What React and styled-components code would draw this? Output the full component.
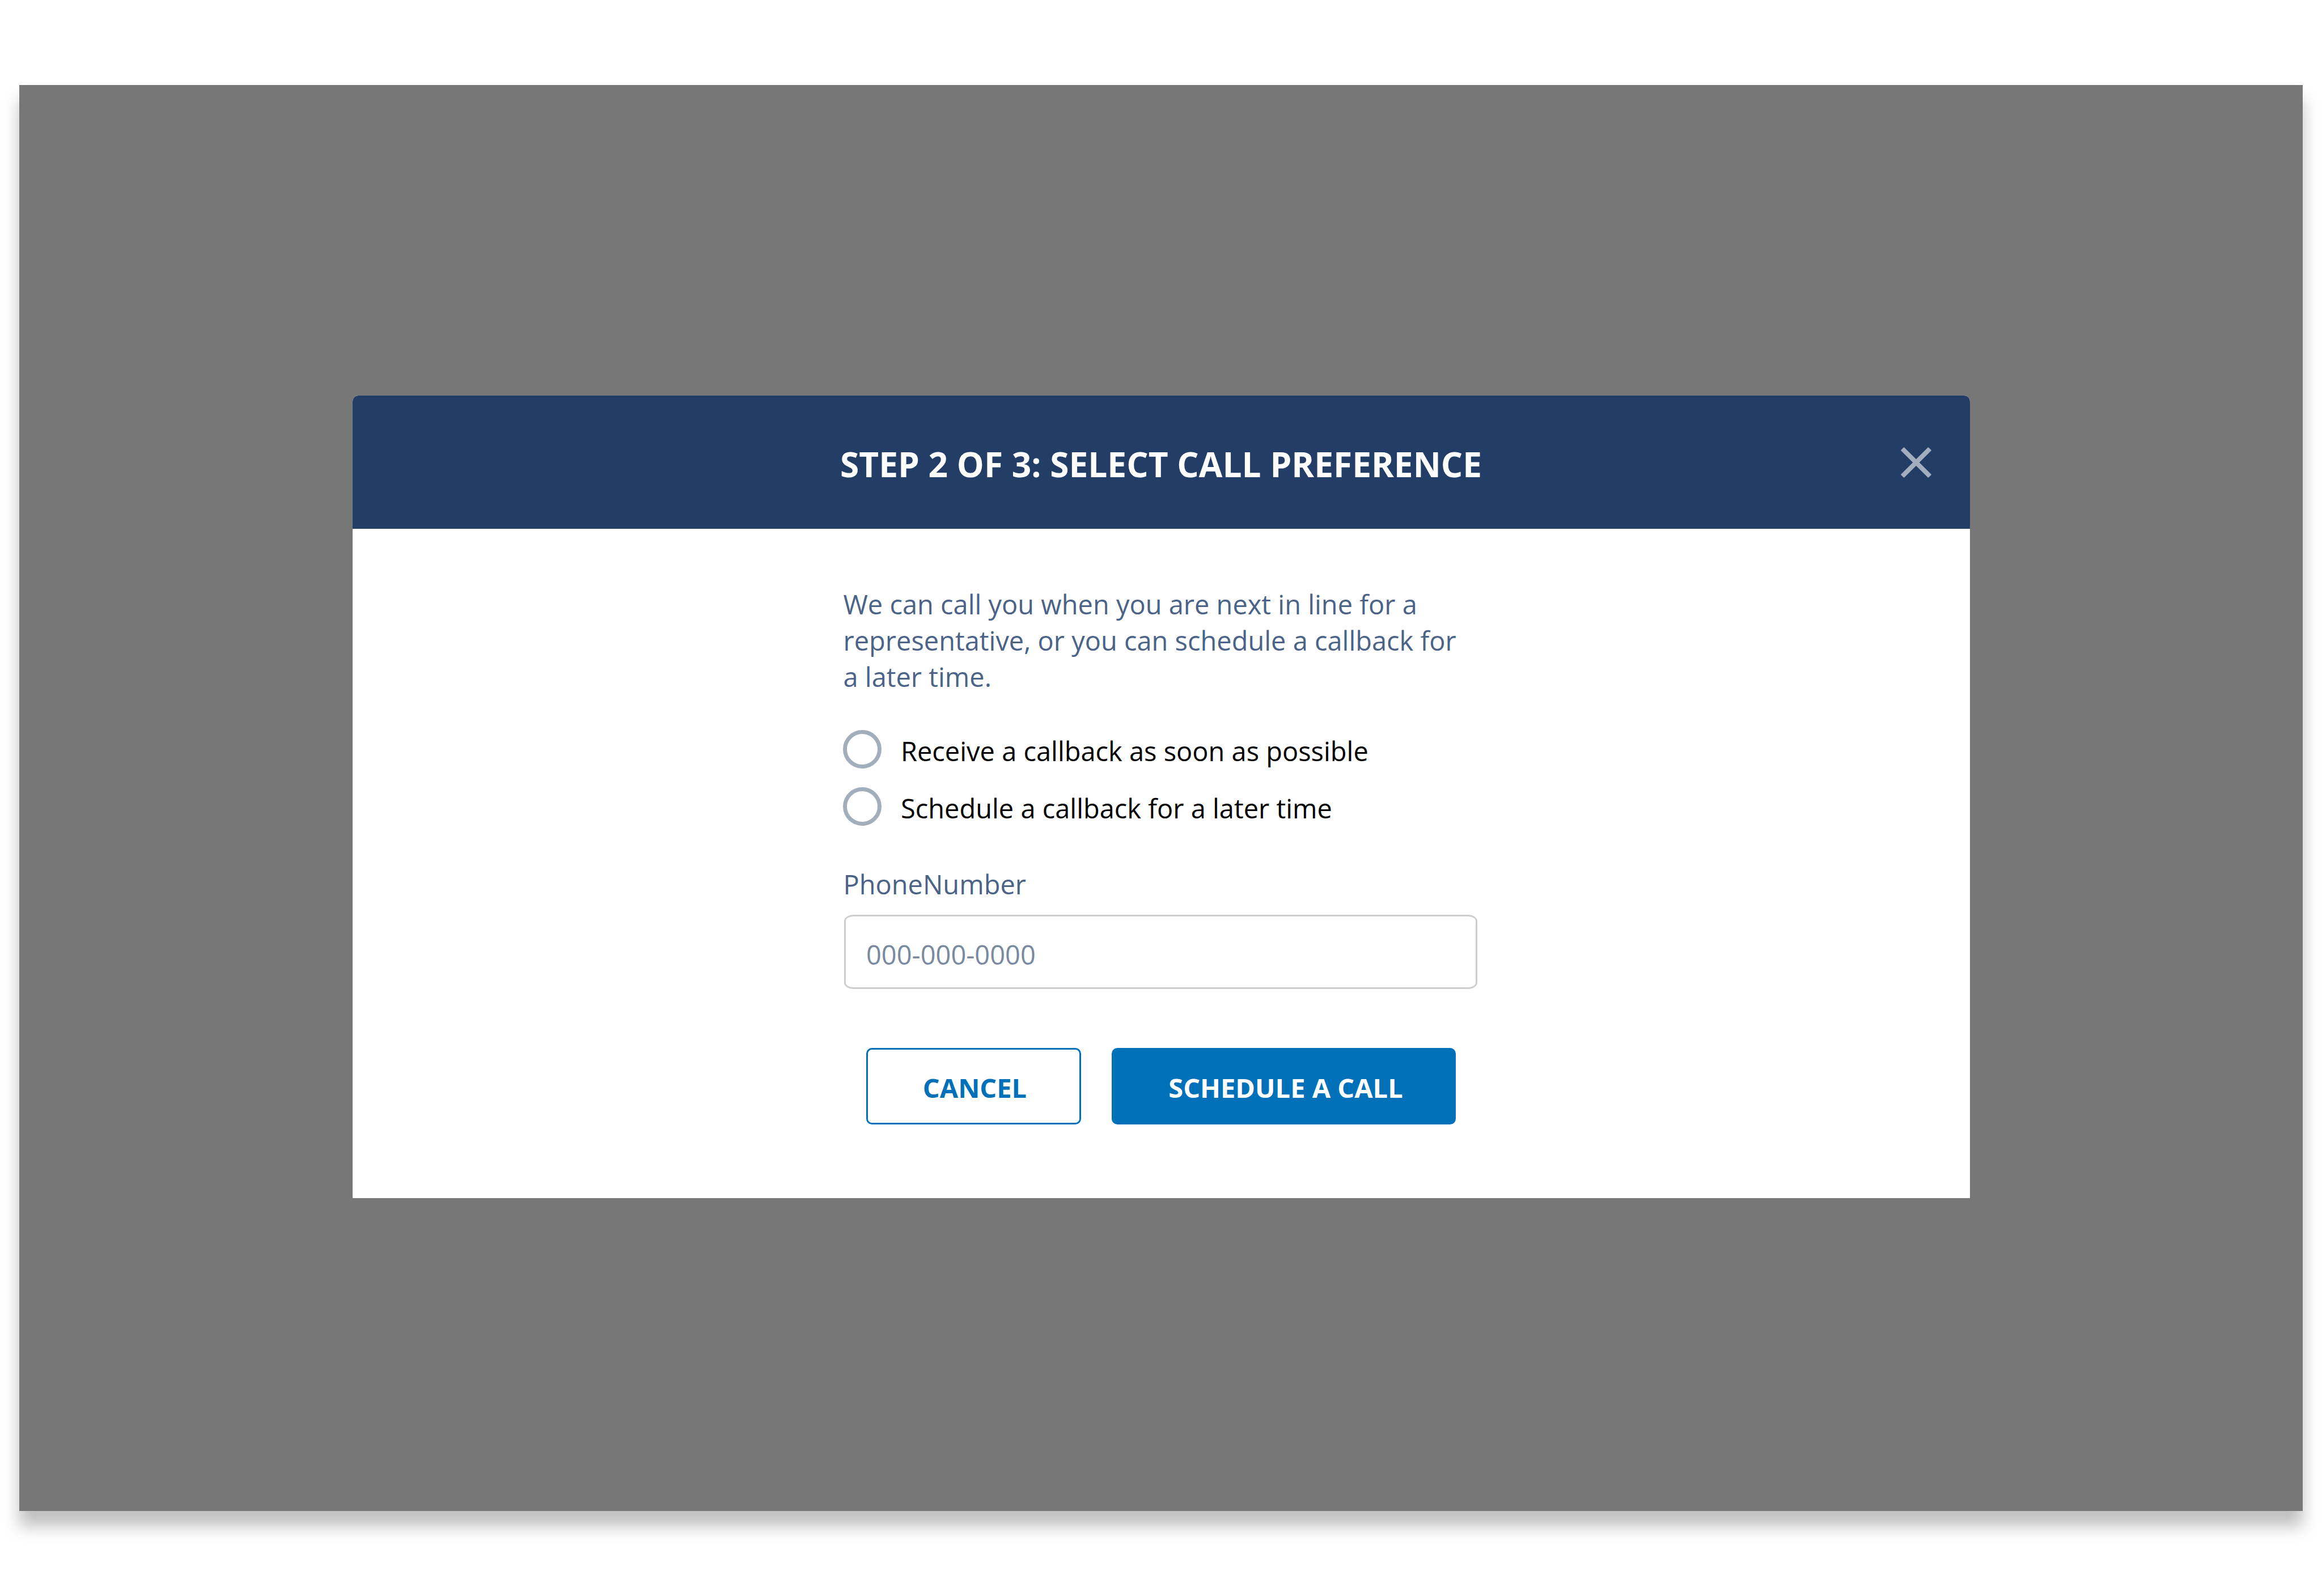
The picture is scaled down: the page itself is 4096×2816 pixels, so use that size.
import { useState } from "react";
import styled, { createGlobalStyle } from "styled-components";

const GlobalStyle = createGlobalStyle`
  * {
    box-sizing: border-box;
  }

  body {
    margin: 0;
    background: #fff;
    font-family: "Open Sans", "Noto Sans", sans-serif;
    font-size: 46.97px;
    line-height: 64px;
  }
`;

const Page = styled.div`
  height: 2816px;
  padding: 150px 34px;
  overflow: hidden;
`;

const Overlay = styled.main`
  display: flex;
  flex-direction: column;
  align-items: center;
  height: 2516px;
  padding-top: 548px;
  background: #777;
  box-shadow: 0 27px 27px rgba(0, 0, 0, 0.25);
`;

const Modal = styled.section`
  width: 2853px;
  height: 1416px;
  background: #fff;
  border-radius: 10px 10px 0 0;
`;

const Header = styled.header`
  display: grid;
  grid-template-columns: 1fr auto 1fr;
  align-items: center;
  height: 235px;
  padding: 0 67.5px;
  background: #233e66;
  border-radius: 10px 10px 0 0;
`;

const Title = styled.h1`
  grid-column: 2;
  margin: 0;
  padding-top: 7px;
  color: #fff;
  font-size: 60.4px;
  font-weight: 700;
  line-height: 82px;
  white-space: nowrap;
`;

const CloseButton = styled.button`
  display: flex;
  justify-self: end;
  padding: 0;
  border: none;
  background: none;
  color: #a3aebd;
`;

const Form = styled.form`
  width: 1124px;
  margin-left: 865.5px;
  padding-top: 101px;
`;

const Intro = styled.p`
  margin: 0 0 62px;
  padding-left: 0.5px;
  color: #4a6387;
`;

const Options = styled.div`
  display: flex;
  flex-direction: column;
  gap: 33px;
`;

const Option = styled.label`
  display: flex;
  align-items: flex-end;
  gap: 33px;
  height: 68px;
  color: #000;
`;

const OptionText = styled.span`
  padding-left: 1px;
  margin-bottom: -1px;
`;

const Radio = styled.input`
  appearance: none;
  width: 68px;
  height: 68px;
  margin: 0;
  border: 7px solid #a3aebd;
  border-radius: 50%;
`;

const FieldLabel = styled.label`
  display: block;
  margin: 71px 0 22px;
  padding-left: 0.5px;
  color: #4a6387;
`;

const PhoneInput = styled.input`
  display: block;
  width: 1117px;
  height: 131px;
  margin-left: 2px;
  padding: 8px 36px 0;
  border: 3px solid #cdced0;
  border-radius: 17px / 11px;
  outline: none;
  background: #fff;
  color: #4a6387;
  font: inherit;

  &::placeholder {
    color: #7889a0;
    opacity: 1;
  }
`;

const Actions = styled.div`
  display: flex;
  gap: 54px;
  margin: 104px 0 0 41px;
`;

const Button = styled.button`
  width: ${(p) => p.$width}px;
  height: 135px;
  padding: 4px 0 0 ${(p) => (p.$primary ? 7 : 4)}px;
  border: 3px solid #0070b8;
  border-radius: 10px;
  background: ${(p) => (p.$primary ? "#0070b8" : "#fff")};
  color: ${(p) => (p.$primary ? "#fff" : "#0070b8")};
  font: inherit;
  font-weight: 700;
  white-space: nowrap;
`;

const options = [
  { value: "asap", label: "Receive a callback as soon as possible" },
  { value: "later", label: "Schedule a callback for a later time" },
];

function CloseIcon() {
  return (
    <svg width="54" height="54" viewBox="0 0 54 54" fill="none">
      <path
        d="M5.6 1 27 22.4 48.4 1 53 5.6 31.6 27 53 48.4 48.4 53 27 31.6 5.6 53 1 48.4 22.4 27 1 5.6Z"
        fill="currentColor"
        stroke="currentColor"
        strokeWidth="1.6"
        strokeLinejoin="round"
      />
    </svg>
  );
}

export default function App() {
  const [phone, setPhone] = useState("");

  return (
    <Page>
      <GlobalStyle />
      <Overlay>
        <Modal>
          <Header>
            <Title>STEP 2 OF 3: SELECT CALL PREFERENCE</Title>
            <CloseButton type="button" aria-label="Close">
              <CloseIcon />
            </CloseButton>
          </Header>
          <Form onSubmit={(e) => e.preventDefault()}>
            <Intro>
              We can call you when you are next in line for a
              <br />
              representative, or you can schedule a callback for
              <br />a later time.
            </Intro>
            <Options>
              {options.map((o) => (
                <Option key={o.value}>
                  <Radio type="radio" name="preference" value={o.value} />
                  <OptionText>{o.label}</OptionText>
                </Option>
              ))}
            </Options>
            <FieldLabel htmlFor="phone">PhoneNumber</FieldLabel>
            <PhoneInput
              id="phone"
              type="tel"
              placeholder="000-000-0000"
              value={phone}
              onChange={(e) => setPhone(e.target.value)}
            />
            <Actions>
              <Button type="button" $width={379}>CANCEL</Button>
              <Button type="submit" $width={607} $primary>SCHEDULE A CALL</Button>
            </Actions>
          </Form>
        </Modal>
      </Overlay>
    </Page>
  );
}
